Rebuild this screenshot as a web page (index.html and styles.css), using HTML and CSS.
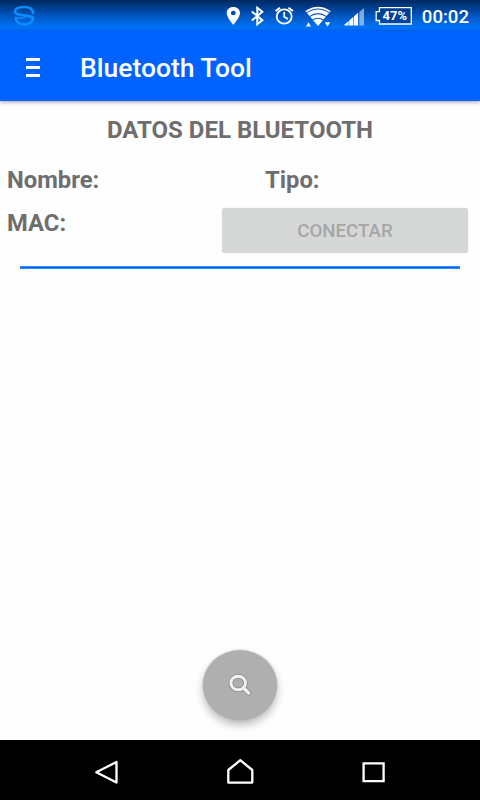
FILE: index.html
```html
<!DOCTYPE html>
<html lang="es">
<head>
<meta charset="utf-8">
<title>Bluetooth Tool</title>
<link rel="stylesheet" href="styles.css">
</head>
<body>
<div class="screen">
  <header class="status">
    <svg class="status-icons" width="480" height="31" viewBox="0 0 480 31">
      <g fill="none" stroke="#0b8dff" stroke-width="2.700" stroke-linecap="round" stroke-linejoin="round">
        <path d="M33.200 13C32.700 8.500 29.500 7 24.500 7C18.500 7 15 8.800 15 11.800C15 14.300 19 14.600 24.500 15.500C30 16.400 33 16.500 33 18.800C32 23 28.500 24.500 24 24.500C19.500 24.500 16 22 15.600 18"/>
        <path d="M15.600 18H25" stroke-width="1.300"/>
      </g>
      <g fill="#fff">
        <path fill-rule="evenodd" d="M233.300 7C229.300 7 226.700 9.700 226.700 13C226.700 17.500 233.300 24.700 233.300 24.700S240 17.500 240 13C240 9.700 237.300 7 233.300 7ZM233.300 10.800A2.400 2.200 0 1 1 233.300 15.200A2.400 2.200 0 1 1 233.300 10.800Z"/>
        <path d="M305.300 11Q318 2.500 330.700 11L318 26Z"/>
        <path d="M306 26.500L308.500 22.300L311 26.500ZM324.700 22.300H330.200L327.500 26.500Z"/>
        <path d="M344.500 25.600V24.500L348.600 21V25.600ZM349.200 25.600V20.500L353.400 16.800V25.600ZM354 25.600V16.200L358.100 12.700V25.600Z"/>
        <path opacity=".5" d="M359.300 25.600V12L364 8V25.600Z"/>
      </g>
      <path d="M379.500 7.700H411.300V24H379.500V20.500H376.200V11.700H379.500Z" fill="#003b8e" fill-opacity=".75" stroke="#fff" stroke-width="1.300"/>
      <g fill="none" stroke="#fff" stroke-width="2">
        <path d="M251.800 11.500L262.300 20.200L257.300 24.200V7.800L262.300 11.800L251.800 20.500"/>
        <ellipse cx="284.200" cy="16.500" rx="7.500" ry="7.100" stroke-width="1.800"/>
        <path d="M284.200 12V16.800L288 19" stroke-width="1.700"/>
        <path d="M275.500 11L280 7.700M288.400 7.700L293 11"/>
      </g>
      <g fill="none" stroke="#0757bd" stroke-width="1.100">
        <path d="M306.500 12.900Q318 5.200 329.500 12.900M309.500 16.600Q318 10.600 326.500 16.600M312.200 20.400Q318 16 323.800 20.400"/>
      </g>
    </svg>
    <span class="battery">47%</span>
    <span class="clock">00:02</span>
  </header>
  <div class="appbar">
    <div class="menu"><i></i><i></i><i></i></div>
    <h1 class="squash">Bluetooth Tool</h1>
  </div>
  <main class="content">
    <h2>DATOS DEL BLUETOOTH</h2>
    <div class="fields">
      <span class="label">Nombre:</span>
      <span class="label">Tipo:</span>
    </div>
    <div class="device">
      <span class="label">MAC:</span>
      <button class="connect" disabled><span class="squash">CONECTAR</span></button>
    </div>
    <div class="divider"></div>
    <button class="search" aria-label="Buscar">
      <svg width="26" height="26" viewBox="0 0 26 26" fill="none" stroke-linecap="round">
        <g stroke="#858585" stroke-width="4.500"><ellipse cx="11.200" cy="11" rx="7.300" ry="6.800"/><path d="M17 16.500L21.700 21" stroke-width="5"/></g>
        <g stroke="#f0f0f0" stroke-width="3"><ellipse cx="11.200" cy="11" rx="7.300" ry="6.800"/><path d="M17 16.500L21.700 21" stroke-width="3.500"/></g>
      </svg>
    </button>
  </main>
  <nav class="navbar">
    <svg width="480" height="60" viewBox="0 0 480 60" fill="none" stroke="#fff" stroke-width="2.300" stroke-linejoin="round">
      <path d="M116.500 22V42.500L96.300 32.200Z"/>
      <path d="M228.300 42.600V30L240.300 20.200L252.300 30V42.600Z"/>
      <path d="M363.600 23.300H383.600V41.200H363.600Z" stroke-linejoin="miter"/>
    </svg>
  </nav>
</div>
</body>
</html>
```
FILE: styles.css
```css
* { box-sizing: border-box; }
body { margin: 0; font-family: Roboto, "Liberation Sans", sans-serif; }
h1, h2 { margin: 0; }
.screen { width: 480px; height: 800px; display: flex; flex-direction: column; background: #fefefe; overflow: hidden; }
.squash { transform: scaleY(.96); display: block; white-space: nowrap; }

.status { position: relative; height: 31px; flex: none; display: flex; align-items: center; justify-content: flex-end; padding: 2px 11px 0 0; color: #fff; background: linear-gradient(#00285f, #0050b5 45%, #0073f6 88%, #006cff); }
.status-icons { position: absolute; left: 0; top: 0; }
.battery { position: relative; width: 30px; margin: -2px 12px 0 0; font-size: 13px; font-weight: 700; text-align: center; }
.clock { position: relative; font-size: 18.600px; font-weight: 500; }

.appbar { position: relative; height: 70px; flex: none; display: flex; align-items: center; padding: 2px 26px 0; background: #0062ff; box-shadow: 0 1px 4px rgba(0, 0, 0, .4); }
.menu { width: 14px; height: 19px; display: flex; flex-direction: column; justify-content: space-between; margin-right: 40px; }
.menu i { height: 3px; background: #fff; }
h1 { padding-top: 2px; font-size: 26.500px; line-height: 32px; font-weight: 500; color: #fff; }

.content { flex: 1; display: flex; flex-direction: column; }
h2, .label { color: #6e6e6e; font-size: 24px; line-height: 28px; font-weight: 700; }
h2 { margin-top: 15px; text-align: center; }
.label { font-size: 23.800px; }
.fields { display: grid; grid-template-columns: 258px 1fr; margin-top: 22px; padding-left: 7px; }
.device { display: flex; justify-content: space-between; margin-top: 14px; padding: 0 12px 0 7px; }
.connect { width: 246px; height: 45px; padding: 0; border: 0; border-radius: 3px; background: #d6d8d7; color: #a5a7a6; font: 500 18.670px/22px Roboto, sans-serif; box-shadow: 0 0 1px #c8caca; }
.device .label { align-self: flex-start; padding-top: 1px; }
.divider { height: 3px; margin: 13px 20px 0; background: #0062ff; border: solid #2c8eff; border-width: 1px 0; }
.search { width: 74px; height: 70px; margin: auto 203px 20px auto; padding: 0; border: 0; border-radius: 50%; display: grid; place-items: center; background: #afafaf; box-shadow: 0 5px 9px rgba(0, 0, 0, .28), 0 0 2px rgba(0, 0, 0, .2); }

.navbar { height: 60px; flex: none; background: #000; }
.navbar svg { display: block; }
```
